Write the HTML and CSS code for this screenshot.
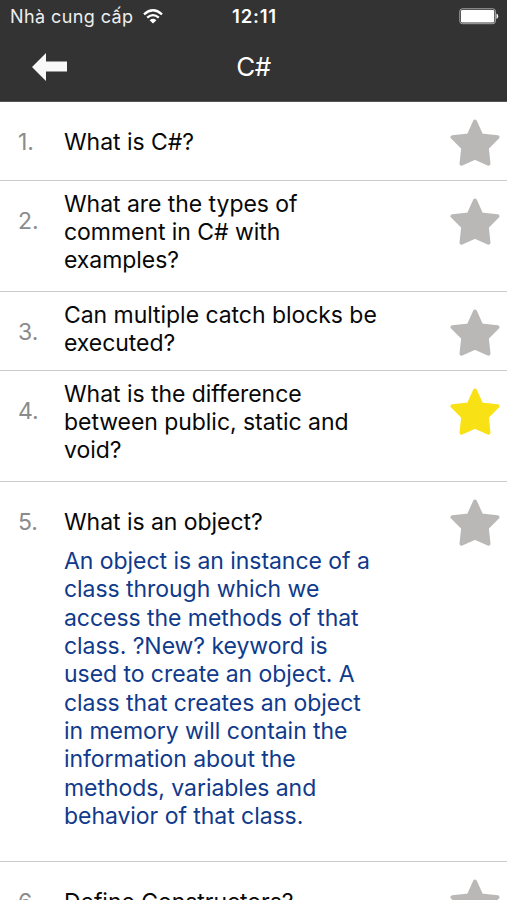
FILE: index.html
```
<!DOCTYPE html>
<html lang="vi">
<head>
<meta charset="utf-8">
<title>C#</title>
<link rel="stylesheet" href="styles.css">
</head>
<body>
<svg class="defs" aria-hidden="true"><symbol id="star" viewBox="0 0 50 48"><path d="M25 2.5 31.2 16.4 47.5 18.2 36.8 28.9 38.5 44.7 25 38.7 11.5 44.7 13.2 28.9 2.5 18.2 18.8 16.4Z" fill="currentColor" stroke="currentColor" stroke-width="4" stroke-linejoin="round"/></symbol></svg>
<header class="header">
  <div class="status">
    <div class="carrier"><span>Nhà cung cấp</span>
      <svg class="wifi" viewBox="0 0 20 15"><g fill="none" stroke="#fff" stroke-width="2.3"><path d="M1 5.3Q10-2.7 19 5.3"/><path d="M4.2 8.7Q10 3.5 15.8 8.7"/></g><path d="M6.6 11.2Q10 8.3 13.4 11.2L10 14.6Z" fill="#fff"/></svg>
    </div>
    <div class="time">12:11</div>
    <svg class="battery" viewBox="0 0 40 17"><rect x=".8" y=".8" width="35.6" height="14.9" rx="2.5" fill="none" stroke="#aaa" stroke-width="1"/><rect x="2" y="2" width="33.2" height="12.5" rx="1.2" fill="#fff"/><path d="M37.5 5.4Q39.2 6 39.2 8.2T37.5 11Z" fill="#fff"/></svg>
  </div>
  <div class="nav">
    <svg class="back" viewBox="0 0 36 28"><path d="M0 14 14 0V8.5H35V18.5H14V28Z" fill="#f8f8f8"/></svg>
    <h1>C#</h1>
  </div>
</header>
<main>
  <section class="row single"><span class="num">1.</span><div class="text"><p class="question">What is C#?</p></div><svg class="star"><use href="#star"/></svg></section>
  <section class="row tall"><span class="num">2.</span><div class="text"><p class="question">What are the types of<br>comment in C# with<br>examples?</p></div><svg class="star"><use href="#star"/></svg></section>
  <section class="row"><span class="num">3.</span><div class="text"><p class="question">Can multiple catch blocks be<br>executed?</p></div><svg class="star"><use href="#star"/></svg></section>
  <section class="row tall"><span class="num">4.</span><div class="text"><p class="question">What is the difference<br>between public, static and<br>void?</p></div><svg class="star active"><use href="#star"/></svg></section>
  <section class="row single open"><span class="num">5.</span><div class="text"><p class="question">What is an object?</p><p class="answer">An object is an instance of a<br>class through which we<br>access the methods of that<br>class. ?New? keyword is<br>used to create an object. A<br>class that creates an object<br>in memory will contain the<br>information about the<br>methods, variables and<br>behavior of that class.</p></div><svg class="star"><use href="#star"/></svg></section>
  <section class="row single"><span class="num">6.</span><div class="text"><p class="question">Define Constructors?</p></div><svg class="star"><use href="#star"/></svg></section>
</main>
</body>
</html>
```
FILE: styles.css
```
* { box-sizing: border-box; }
body {
  margin: 0;
  height: 900px;
  overflow: hidden;
  background: #fff;
  color: #080808;
  font: 23px/28.3px Inter, "Liberation Sans", sans-serif;
  letter-spacing: -.05px;
}
.defs { display: none; }
.header { height: 102px; background: #333; color: #fff; border-bottom: 1px solid #555; }
.status {
  display: grid;
  grid-template-columns: 1fr auto 1fr;
  align-items: center;
  height: 33px;
  padding: 0 8px 0 10px;
  font-size: 18px;
  line-height: 33px;
}
.carrier { display: flex; align-items: center; gap: 10px; color: #eee; letter-spacing: .4px; }
.wifi { width: 20px; height: 15px; }
.time { font-size: 18.5px; font-weight: 600; letter-spacing: .8px; }
.battery { width: 40px; height: 17px; justify-self: end; }
.nav {
  display: grid;
  grid-template-columns: 1fr auto 1fr;
  align-items: center;
  height: 67px;
  padding-left: 32px;
  padding-right: 32px;
}
.back { width: 36px; height: 28px; }
h1 { margin: 2px 0 0; font-size: 26px; font-weight: 400; letter-spacing: -.4px; }
.row {
  display: grid;
  grid-template-columns: 46px 1fr 50px;
  align-items: start;
  height: 79px;
  padding: 9px 7.5px 0 18px;
  border-bottom: 1px solid #ccc;
  white-space: nowrap;
}
.tall { height: 111px; }
.open { height: 380px; }
.num { margin-top: 17px; color: #8b8b8b; }
.single .text { padding-top: 17px; }
p { margin: 0; }
.question { line-height: 28px; }
.answer { margin-top: 11px; color: #103a8b; line-height: 28.35px; }
.star { width: 50px; height: 48px; margin-top: 7.5px; color: #bab8b6; }
.active { color: #f8e114; }
```
